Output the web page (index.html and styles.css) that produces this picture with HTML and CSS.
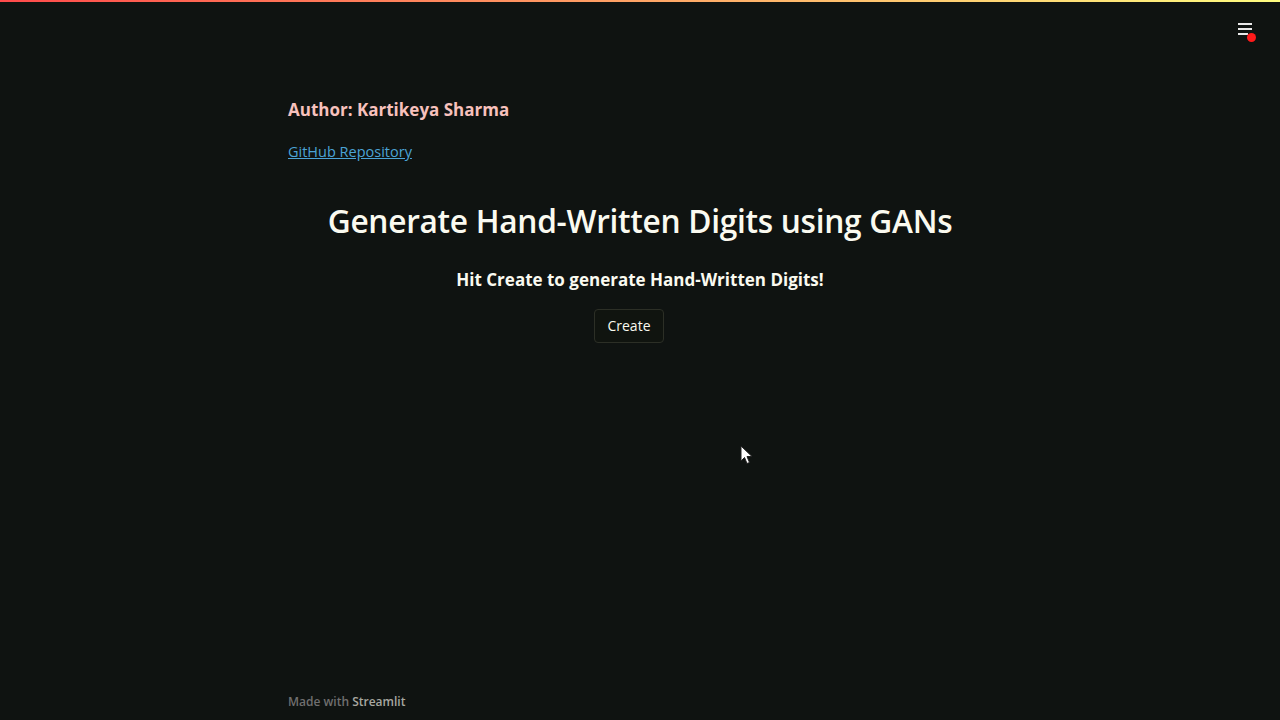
FILE: index.html
```html
<!DOCTYPE html>
<html>
<head>
<meta charset="utf-8">
<link rel="stylesheet" href="styles.css">
</head>
<body>
<div class="decoration"></div>
<header class="toolbar">
  <div class="menu">
    <svg width="20" height="20" viewBox="0 0 20 20">
      <rect x="2" y="4" width="14" height="2" fill="#e8e8e8"/>
      <rect x="2" y="9" width="14" height="2" fill="#e8e8e8"/>
      <rect x="2" y="14" width="10" height="2" fill="#e8e8e8"/>
    </svg>
    <span class="dot"></span>
  </div>
</header>
<main class="block">
  <h3 class="author">Author: Kartikeya Sharma</h3>
  <p class="repo"><a href="#">GitHub Repository</a></p>
  <h1 class="title">Generate Hand-Written Digits using GANs</h1>
  <h3 class="subtitle">Hit Create to generate Hand-Written Digits!</h3>
  <div class="btnrow"><button class="btn">Create</button></div>
</main>
<footer class="footer">Made with <span class="brand">Streamlit</span></footer>
<svg class="cursor" width="14" height="20" viewBox="0 0 14 20">
  <path d="M1 1 L1 16 L4.5 12.5 L7 18.5 L9.5 17.5 L7 11.5 L12 11.5 Z" fill="#ffffff" stroke="#222" stroke-width="1"/>
</svg>
</body>
</html>
```
FILE: styles.css
```css
html, body {
  margin: 0;
  padding: 0;
  height: 100%;
}
body {
  background: #0f1311;
  color: #fafaf0;
  font-family: "Open Sans", "Noto Sans", sans-serif;
  position: relative;
  overflow: hidden;
  display: flex;
  flex-direction: column;
}
.decoration {
  height: 2px;
  background: linear-gradient(90deg, #ff4b4b, #fffd80);
  flex: none;
}
.toolbar {
  height: 0;
  position: relative;
}
.menu {
  position: absolute;
  right: 24px;
  top: 17px;
  width: 20px;
  height: 20px;
}
.dot {
  position: absolute;
  left: 11px;
  top: 14px;
  width: 9px;
  height: 9px;
  border-radius: 50%;
  background: #ff1a1a;
}
.block {
  width: 704px;
  margin: 0 auto;
  padding-top: 95px;
  flex: 1;
}
.author {
  margin: 0;
  font-size: 17px;
  font-weight: 700;
  color: #f7c1bd;
  line-height: 26px;
}
.repo {
  margin: 19px 0 0;
  font-size: 14.5px;
  line-height: 20px;
}
.repo a {
  color: #4ba3d6;
}
.title {
  margin: 37px 0 0;
  text-align: center;
  font-size: 31.7px;
  font-weight: 600;
  line-height: 44px;
  letter-spacing: -0.3px;
}
.subtitle {
  margin: 24px 0 0;
  text-align: center;
  font-size: 17px;
  font-weight: 700;
  line-height: 26px;
}
.btnrow {
  display: flex;
  justify-content: center;
  margin-top: 16px;
  padding-right: 22px;
}
.btn {
  background: #10140f;
  border: 1px solid #2c2f26;
  border-radius: 4px;
  color: #fafaf0;
  font-family: inherit;
  font-size: 14px;
  padding: 6px 12px;
  line-height: 20px;
}
.footer {
  width: 704px;
  margin: 0 auto;
  padding-bottom: 10px;
  font-size: 12px;
  color: #6f6f6f;
  font-weight: 600;
}
.brand {
  color: #a7a7a0;
}
.cursor {
  position: absolute;
  left: 740px;
  top: 445px;
}
```
